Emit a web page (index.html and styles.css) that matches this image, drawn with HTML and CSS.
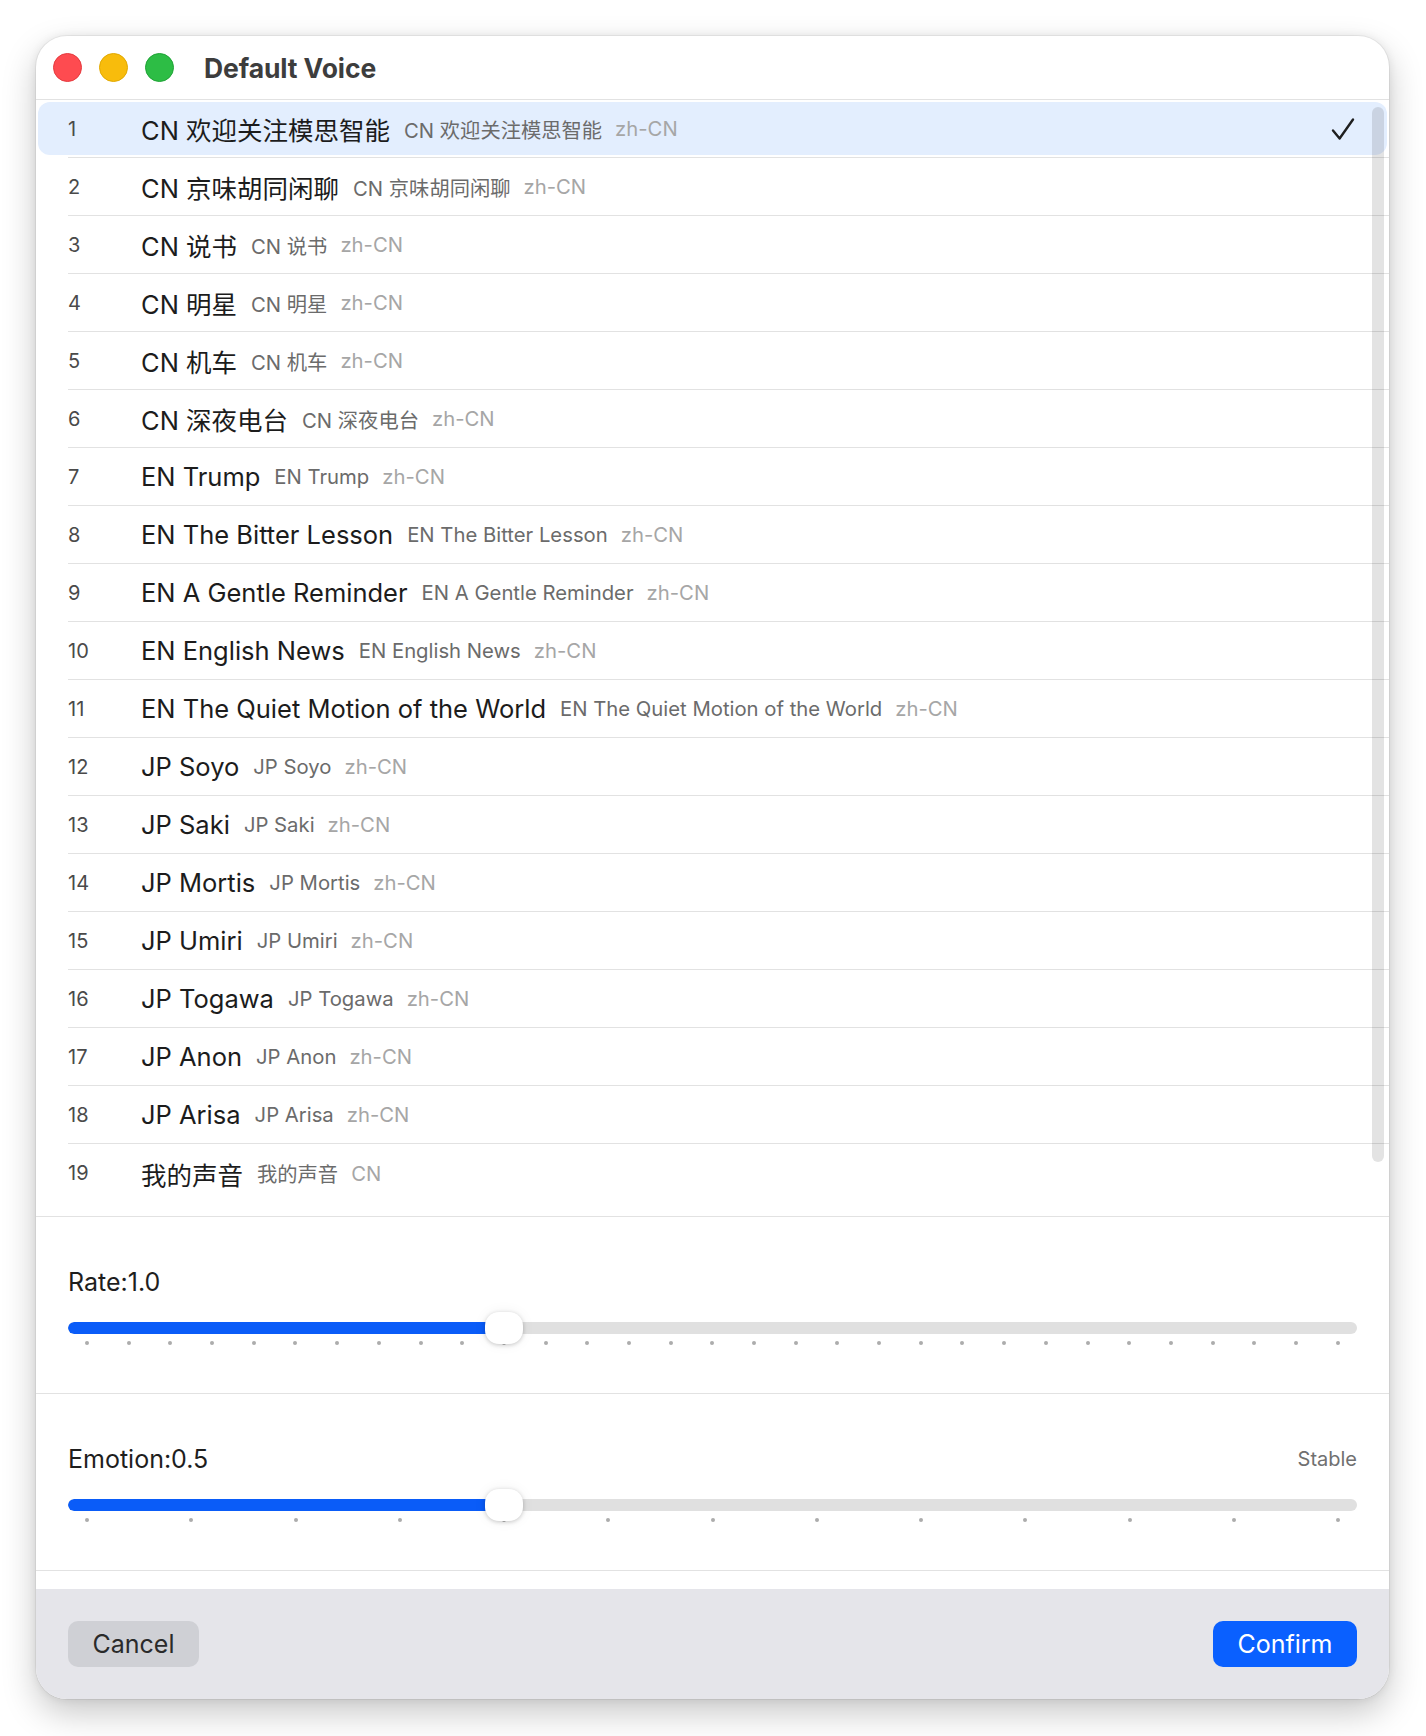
FILE: index.html
```html
<!DOCTYPE html>
<html lang="zh-CN">
<head>
<meta charset="utf-8">
<title>Default Voice</title>
<link rel="stylesheet" href="styles.css">
</head>
<body>
<div class="window">
  <div class="titlebar">
    <div class="lights">
      <span class="light red"></span>
      <span class="light yellow"></span>
      <span class="light green"></span>
    </div>
    <div class="title">Default Voice</div>
  </div>

  <div class="list">
    <div class="row selected"><span class="num">1</span><span class="name">CN 欢迎关注模思智能</span><span class="sub">CN 欢迎关注模思智能</span><span class="lang">zh-CN</span>
      <svg class="check" width="24" height="24" viewBox="0 0 24 24"><path d="M2 13.5 L8.6 21.5 L22 2.5" fill="none" stroke="#1f1f1f" stroke-width="2.4" stroke-linecap="round" stroke-linejoin="round"/></svg>
    </div>
    <div class="row"><span class="num">2</span><span class="name">CN 京味胡同闲聊</span><span class="sub">CN 京味胡同闲聊</span><span class="lang">zh-CN</span></div>
    <div class="row"><span class="num">3</span><span class="name">CN 说书</span><span class="sub">CN 说书</span><span class="lang">zh-CN</span></div>
    <div class="row"><span class="num">4</span><span class="name">CN 明星</span><span class="sub">CN 明星</span><span class="lang">zh-CN</span></div>
    <div class="row"><span class="num">5</span><span class="name">CN 机车</span><span class="sub">CN 机车</span><span class="lang">zh-CN</span></div>
    <div class="row"><span class="num">6</span><span class="name">CN 深夜电台</span><span class="sub">CN 深夜电台</span><span class="lang">zh-CN</span></div>
    <div class="row"><span class="num">7</span><span class="name">EN Trump</span><span class="sub">EN Trump</span><span class="lang">zh-CN</span></div>
    <div class="row"><span class="num">8</span><span class="name">EN The Bitter Lesson</span><span class="sub">EN The Bitter Lesson</span><span class="lang">zh-CN</span></div>
    <div class="row"><span class="num">9</span><span class="name">EN A Gentle Reminder</span><span class="sub">EN A Gentle Reminder</span><span class="lang">zh-CN</span></div>
    <div class="row"><span class="num">10</span><span class="name">EN English News</span><span class="sub">EN English News</span><span class="lang">zh-CN</span></div>
    <div class="row"><span class="num">11</span><span class="name">EN The Quiet Motion of the World</span><span class="sub">EN The Quiet Motion of the World</span><span class="lang">zh-CN</span></div>
    <div class="row"><span class="num">12</span><span class="name">JP Soyo</span><span class="sub">JP Soyo</span><span class="lang">zh-CN</span></div>
    <div class="row"><span class="num">13</span><span class="name">JP Saki</span><span class="sub">JP Saki</span><span class="lang">zh-CN</span></div>
    <div class="row"><span class="num">14</span><span class="name">JP Mortis</span><span class="sub">JP Mortis</span><span class="lang">zh-CN</span></div>
    <div class="row"><span class="num">15</span><span class="name">JP Umiri</span><span class="sub">JP Umiri</span><span class="lang">zh-CN</span></div>
    <div class="row"><span class="num">16</span><span class="name">JP Togawa</span><span class="sub">JP Togawa</span><span class="lang">zh-CN</span></div>
    <div class="row"><span class="num">17</span><span class="name">JP Anon</span><span class="sub">JP Anon</span><span class="lang">zh-CN</span></div>
    <div class="row"><span class="num">18</span><span class="name">JP Arisa</span><span class="sub">JP Arisa</span><span class="lang">zh-CN</span></div>
    <div class="row last"><span class="num">19</span><span class="name">我的声音</span><span class="sub">我的声音</span><span class="lang">CN</span></div>
    <div class="scrollbar"></div>
  </div>

  <div class="section">
    <div class="label-row"><span class="label">Rate:1.0</span></div>
    <div class="slider">
      <div class="track"><div class="fill" style="width: 436px"></div></div>
      <div class="knob" style="left: 417px"></div>
    </div>
    <div class="ticks">
      <i></i><i></i><i></i><i></i><i></i><i></i><i></i><i></i><i></i><i></i>
      <i></i><i></i><i></i><i></i><i></i><i></i><i></i><i></i><i></i><i></i>
      <i></i><i></i><i></i><i></i><i></i><i></i><i></i><i></i><i></i><i></i>
      <i></i>
    </div>
  </div>

  <div class="section">
    <div class="label-row"><span class="label">Emotion:0.5</span><span class="hint">Stable</span></div>
    <div class="slider">
      <div class="track"><div class="fill" style="width: 436px"></div></div>
      <div class="knob" style="left: 417px"></div>
    </div>
    <div class="ticks">
      <i></i><i></i><i></i><i></i><i></i><i></i><i></i><i></i><i></i><i></i>
      <i></i><i></i><i></i>
    </div>
  </div>

  <div class="spacer"></div>

  <div class="footer">
    <button class="btn cancel">Cancel</button>
    <button class="btn confirm">Confirm</button>
  </div>
</div>
</body>
</html>
```

FILE: styles.css
```css
html, body {
  margin: 0;
  padding: 0;
  background: #ffffff;
}
body {
  width: 1426px;
  height: 1736px;
  font-family: Inter, "Noto Sans CJK SC", sans-serif;
  color: #1f1f1f;
  overflow: hidden;
}
.window {
  margin: 36px 0 0 36px;
  width: 1353px;
  height: 1663px;
  border-radius: 31px;
  background: #ffffff;
  overflow: hidden;
  display: flex;
  flex-direction: column;
  box-shadow: 0 14px 34px rgba(0, 0, 0, 0.22), 0 0 10px rgba(0, 0, 0, 0.08), 0 0 0 1px rgba(0, 0, 0, 0.05);
}
.titlebar {
  height: 63px;
  flex: none;
  display: flex;
  align-items: center;
  border-bottom: 1px solid #e2e2e2;
}
.lights {
  display: flex;
  gap: 17px;
  margin-left: 17px;
}
.light {
  width: 27px;
  height: 27px;
  border-radius: 50%;
  display: block;
}
.red { background: #fe4b50; border: 1px solid #e43a3e; }
.yellow { background: #f8bc0c; border: 1px solid #e0a800; }
.green { background: #2dbd45; border: 1px solid #1fa336; }
.title {
  margin-left: 30px;
  font-size: 26.5px;
  font-weight: 700;
  color: #3d3d3d;
  letter-spacing: -0.1px;
}

.list {
  position: relative;
  flex: none;
  padding: 0 0 14px;
  border-bottom: 1px solid #e2e2e2;
}
.row {
  position: relative;
  height: 57px;
  margin-left: 32px;
  padding-right: 34px;
  display: flex;
  align-items: center;
  border-bottom: 1px solid #e2e2e2;
}
.row.last {
  border-bottom: none;
  height: 58px;
}
.row.selected::before {
  content: "";
  position: absolute;
  left: -30px;
  right: 2px;
  top: 2px;
  bottom: 2px;
  border-radius: 12px;
  background: #e3eefe;
}
.row > * {
  position: relative;
}
.num {
  width: 73px;
  flex: none;
  font-size: 20px;
  color: #4a4a4a;
}
.name {
  font-size: 25.5px;
  color: #1c1c1c;
  margin-right: 14px;
}
.sub {
  font-size: 20.3px;
  color: #6b6b6b;
  margin-right: 13px;
}
.lang {
  font-size: 20.3px;
  color: #a6a6a6;
}
.check {
  margin-left: auto;
}
.scrollbar {
  position: absolute;
  right: 5px;
  top: 7px;
  width: 12px;
  height: 1055px;
  border-radius: 6px;
  background: rgba(0, 0, 0, 0.11);
}

.section {
  flex: none;
  padding: 50px 32px 48px;
  border-bottom: 1px solid #e2e2e2;
}
.label-row {
  height: 30px;
  display: flex;
  align-items: center;
  justify-content: space-between;
}
.label {
  font-size: 25px;
  color: #1e1e1e;
}
.hint {
  font-size: 20px;
  color: #707070;
}
.slider {
  position: relative;
  margin-top: 25px;
  height: 12px;
}
.track {
  height: 12px;
  border-radius: 6px;
  background: #e0e0e0;
  overflow: hidden;
}
.fill {
  height: 100%;
  background: #0a5cf8;
  border-radius: 6px 0 0 6px;
}
.knob {
  position: absolute;
  top: -10px;
  width: 38px;
  height: 32px;
  border-radius: 14px;
  background: #ffffff;
  box-shadow: 0 1px 4px rgba(0, 0, 0, 0.2), 0 0 14px rgba(0, 0, 0, 0.06);
}
.ticks {
  margin-top: 7px;
  padding: 0 17px;
  height: 4px;
  display: flex;
  justify-content: space-between;
}
.ticks i {
  display: block;
  width: 4px;
  height: 4px;
  border-radius: 50%;
  background: #acacac;
}

.spacer {
  height: 18px;
  flex: none;
}
.footer {
  flex: 1;
  background: #e5e5ea;
  display: flex;
  justify-content: space-between;
  align-items: flex-start;
  padding: 32px 32px 0;
}
.btn {
  height: 46px;
  border: none;
  border-radius: 10px;
  font-family: Inter, "Noto Sans CJK SC", sans-serif;
  font-size: 25px;
  padding: 0;
}
.cancel {
  width: 131px;
  background: #cfd0d5;
  color: #2a2a2a;
}
.confirm {
  width: 144px;
  background: #0a60ff;
  color: #ffffff;
}
```
